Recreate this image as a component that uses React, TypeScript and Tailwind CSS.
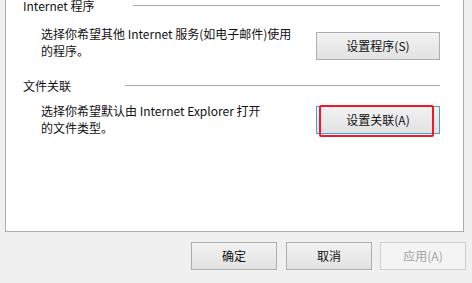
import React from 'react'

const font = { fontFamily: '"Segoe UI", "Noto Sans CJK SC", "Liberation Sans", sans-serif' }

function WinButton({
  label,
  className = '',
  disabled = false,
  focused = false,
}: {
  label: string
  className?: string
  disabled?: boolean
  focused?: boolean
}) {
  const base =
    'flex items-center justify-center text-[12px] leading-none border select-none'
  const look = disabled
    ? 'border-[#cfcfcf] bg-[#f4f4f4] text-[#a3a3a3]'
    : focused
      ? 'border-[#4a9ae6] bg-gradient-to-b from-[#f2f2f2] to-[#e2e2e2] text-[#111]'
      : 'border-[#adadad] bg-gradient-to-b from-[#f2f2f2] to-[#e2e2e2] text-[#111]'
  return <div className={`${base} ${look} ${className}`}>{label}</div>
}

function Header({ title, gap }: { title: string; gap: string }) {
  return (
    <div className="flex items-center h-[17px] text-[12px] leading-[17px] text-[#111]">
      <span className="whitespace-nowrap">{title}</span>
      <div className={`flex-1 h-px bg-[#a9a9a9] ${gap}`} />
    </div>
  )
}

export default function App() {
  return (
    <div className="w-[472px] h-[283px] bg-[#f0f0f0] overflow-hidden" style={font}>
      {/* Tab page panel */}
      <div className="ml-[5px] w-[459px] h-[235px] bg-white border-x border-b border-[#adadad] pl-[17px] pr-[23px]">
        {/* Internet 程序 */}
        <div className="-mt-[3px]">
          <Header title="Internet 程序" gap="ml-[38px]" />
        </div>
        <div className="flex items-start mt-[11px]">
          <p className="pl-[18px] text-[12px] leading-[17px] text-[#111] whitespace-nowrap">
            选择你希望其他 Internet 服务(如电子邮件)使用
            <br />
            的程序。
          </p>
          <WinButton label="设置程序(S)" className="ml-auto mt-[7px] w-[124px] h-[28px]" />
        </div>

        {/* 文件关联 */}
        <div className="mt-[17px]">
          <Header title="文件关联" gap="ml-[54px]" />
        </div>
        <div className="flex items-start mt-[8px]">
          <p className="pl-[18px] text-[12px] leading-[17px] text-[#111] whitespace-nowrap">
            选择你希望默认由 Internet Explorer 打开
            <br />
            的文件类型。
          </p>
          <div className="relative ml-auto mt-[4px]">
            <WinButton label="设置关联(A)" focused className="w-[124px] h-[28px]" />
            {/* red highlight annotation */}
            <div className="absolute left-[3px] -top-[1px] w-[115px] h-[32px] border-2 border-[#ec1c24] rounded-[2px]" />
          </div>
        </div>
      </div>

      {/* Dialog buttons */}
      <div className="flex justify-end gap-[8px] mt-[10px] pr-[6px]">
        <WinButton label="确定" className="w-[86px] h-[28px] mr-px" />
        <WinButton label="取消" className="w-[86px] h-[28px]" />
        <WinButton label="应用(A)" disabled className="w-[86px] h-[28px]" />
      </div>
    </div>
  )
}
